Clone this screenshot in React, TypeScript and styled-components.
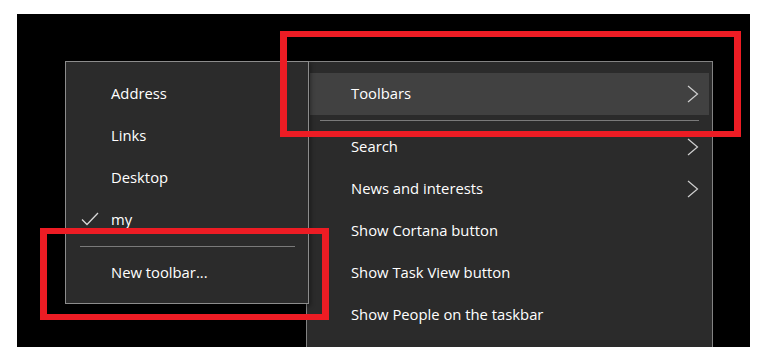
import styled, { createGlobalStyle } from "styled-components";

const GlobalStyle = createGlobalStyle`
  html, body {
    margin: 0;
    padding: 0;
    background: #ffffff;
  }
  body {
    font-family: "Open Sans", "Noto Sans", sans-serif;
  }
`;

const Screen = styled.div`
  position: relative;
  box-sizing: border-box;
  display: flex;
  align-items: flex-start;
  margin: 14px 0 0 17px;
  padding-top: 47px;
  width: 733px;
  height: 333px;
  background: #000000;
  overflow: hidden;
`;

const SubMenu = styled.div`
  position: relative;
  z-index: 1;
  box-sizing: border-box;
  display: flex;
  flex-direction: column;
  margin-left: 48px;
  padding: 11px 0 9px 0;
  width: 244px;
  background: #2b2b2b;
  border: 1px solid #8c8c8c;
  box-shadow: 2px 2px 4px rgba(0, 0, 0, 0.35);
`;

const MainMenu = styled.div`
  box-sizing: border-box;
  display: flex;
  flex-direction: column;
  align-self: stretch;
  margin-left: -3px;
  padding: 11px 3px 0 3px;
  width: 407px;
  background: #2b2b2b;
  border: 1px solid #838383;
  border-bottom: none;
`;

const Item = styled.div<{ $active?: boolean; $indent: number }>`
  box-sizing: border-box;
  display: flex;
  align-items: center;
  flex-shrink: 0;
  height: 42px;
  padding: 0 10px 3px ${({ $indent }) => $indent}px;
  background: ${({ $active }) => ($active ? "#414141" : "transparent")};
  color: #ffffff;
  font-size: 14.8px;
`;

const Label = styled.span`
  flex: 1;
  white-space: nowrap;
`;

const CheckSlot = styled.span`
  display: flex;
  align-items: center;
  width: 30px;
`;

const Side = styled.span`
  display: flex;
  margin-top: 2px;
`;

const Separator = styled.div<{ $left: number; $right: number }>`
  flex-shrink: 0;
  margin: 5px ${({ $right }) => $right}px 5px ${({ $left }) => $left}px;
  height: 1px;
  background: #7a7a7a;
`;

const Highlight = styled.div<{ $x: number; $y: number; $w: number; $h: number }>`
  position: absolute;
  z-index: 2;
  box-sizing: border-box;
  left: ${({ $x }) => $x}px;
  top: ${({ $y }) => $y}px;
  width: ${({ $w }) => $w}px;
  height: ${({ $h }) => $h}px;
  border-style: solid;
  border-color: #ed1c24;
  border-width: 6px 7px;
`;

const Chevron = () => (
  <Side>
    <svg width="12" height="18" viewBox="0 0 12 18">
      <polyline
        points="1,1 10.5,9 1,17"
        fill="none"
        stroke="#cfcfcf"
        strokeWidth="1.2"
      />
    </svg>
  </Side>
);

const Check = () => (
  <svg width="18" height="14" viewBox="0 0 18 14">
    <polyline
      points="1,7.5 6,12.5 17,1"
      fill="none"
      stroke="#d8d8d8"
      strokeWidth="1.3"
    />
  </svg>
);

const toolbarItems = [
  { label: "Address", checked: false },
  { label: "Links", checked: false },
  { label: "Desktop", checked: false },
  { label: "my", checked: true },
];

const menuItems = [
  { label: "Search", sub: true },
  { label: "News and interests", sub: true },
  { label: "Show Cortana button", sub: false },
  { label: "Show Task View button", sub: false },
  { label: "Show People on the taskbar", sub: false },
];

export default function App() {
  return (
    <>
      <GlobalStyle />
      <Screen>
        <SubMenu>
          {toolbarItems.map((it) => (
            <Item key={it.label} $indent={15}>
              <CheckSlot>{it.checked && <Check />}</CheckSlot>
              <Label>{it.label}</Label>
            </Item>
          ))}
          <Separator $left={14} $right={13} />
          <Item $indent={45}>
            <Label>New toolbar...</Label>
          </Item>
        </SubMenu>
        <MainMenu>
          <Item $active $indent={41}>
            <Label>Toolbars</Label>
            <Chevron />
          </Item>
          <Separator $left={10} $right={10} />
          {menuItems.map((it) => (
            <Item key={it.label} $indent={41}>
              <Label>{it.label}</Label>
              {it.sub && <Chevron />}
            </Item>
          ))}
        </MainMenu>
        <Highlight $x={263} $y={17} $w={461} $h={106} />
        <Highlight $x={23} $y={214} $w={289} $h={92} />
      </Screen>
    </>
  );
}
